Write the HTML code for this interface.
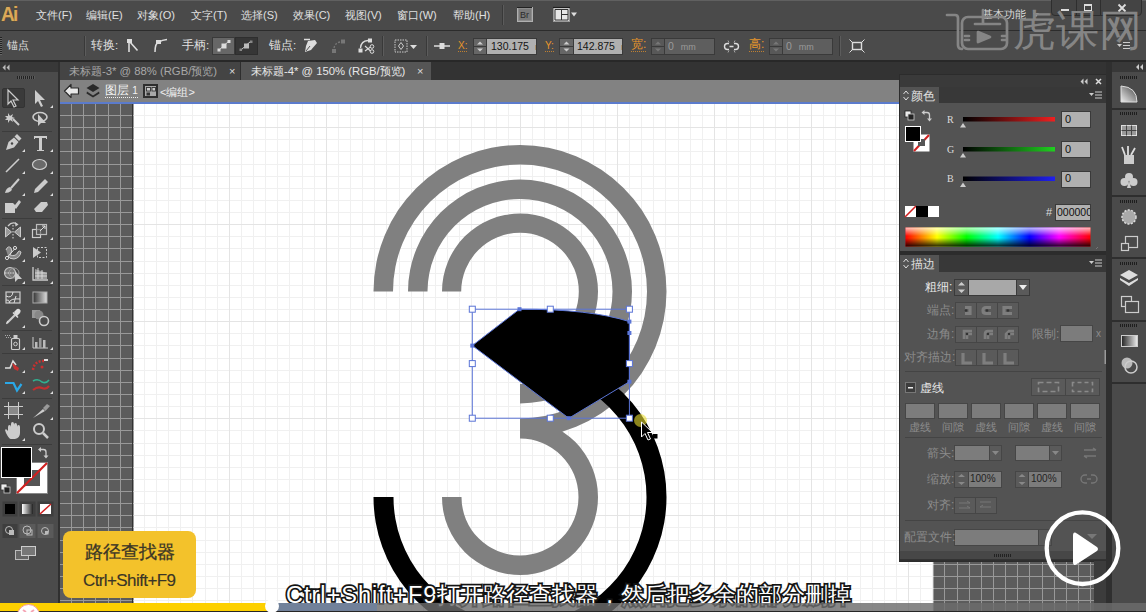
<!DOCTYPE html>
<html><head><meta charset="utf-8">
<style>
*{margin:0;padding:0;box-sizing:border-box}
html,body{width:1146px;height:612px;overflow:hidden;-webkit-font-smoothing:antialiased;background:#535353;font-family:"Liberation Sans",sans-serif;color:#e0e0e0}
.a{position:absolute}
.t{position:absolute;white-space:nowrap;font-size:12px;line-height:14px}
.sep{position:absolute;width:2px;border-left:1px solid #393939;border-right:1px solid #5c5c5c}
.fld{position:absolute;background:#b0b0b0;border:1px solid #3a3a3a;color:#151515;font-family:"Liberation Sans",sans-serif;font-size:10.5px;line-height:14px;padding-left:3px;white-space:nowrap;overflow:hidden}
.spin{position:absolute;background:#666;border:1px solid #3a3a3a}
.org{color:#e8962a}
svg{position:absolute;overflow:visible}
</style></head><body>
<svg class="a" style="left:0;top:0" width="1146" height="612" viewBox="0 0 1146 612">
<defs><clipPath id="ab"><rect x="133.5" y="104" width="800" height="508"/></clipPath></defs>
<rect x="60" y="80" width="1050" height="532" fill="#5c5c5c"/>
<path d="M71.5 104V612 M83.5 104V612 M95.5 104V612 M108.5 104V612 M120.5 104V612 M132.5 104V612 M144.5 104V612 M156.5 104V612 M168.5 104V612 M180.5 104V612 M192.5 104V612 M205.5 104V612 M217.5 104V612 M229.5 104V612 M241.5 104V612 M253.5 104V612 M265.5 104V612 M277.5 104V612 M289.5 104V612 M302.5 104V612 M314.5 104V612 M326.5 104V612 M338.5 104V612 M350.5 104V612 M362.5 104V612 M374.5 104V612 M386.5 104V612 M399.5 104V612 M411.5 104V612 M423.5 104V612 M435.5 104V612 M447.5 104V612 M459.5 104V612 M471.5 104V612 M484.5 104V612 M496.5 104V612 M508.5 104V612 M520.5 104V612 M532.5 104V612 M544.5 104V612 M556.5 104V612 M568.5 104V612 M581.5 104V612 M593.5 104V612 M605.5 104V612 M617.5 104V612 M629.5 104V612 M641.5 104V612 M653.5 104V612 M665.5 104V612 M678.5 104V612 M690.5 104V612 M702.5 104V612 M714.5 104V612 M726.5 104V612 M738.5 104V612 M750.5 104V612 M763.5 104V612 M775.5 104V612 M787.5 104V612 M799.5 104V612 M811.5 104V612 M823.5 104V612 M835.5 104V612 M847.5 104V612 M860.5 104V612 M872.5 104V612 M884.5 104V612 M896.5 104V612 M908.5 104V612 M920.5 104V612 M932.5 104V612 M944.5 104V612 M957.5 104V612 M969.5 104V612 M981.5 104V612 M993.5 104V612 M1005.5 104V612 M1017.5 104V612 M1029.5 104V612 M1042.5 104V612 M1054.5 104V612 M1066.5 104V612 M1078.5 104V612 M1090.5 104V612 M1102.5 104V612 M60 115.5H1110 M60 127.5H1110 M60 139.5H1110 M60 151.5H1110 M60 164.5H1110 M60 176.5H1110 M60 188.5H1110 M60 200.5H1110 M60 212.5H1110 M60 224.5H1110 M60 236.5H1110 M60 248.5H1110 M60 261.5H1110 M60 273.5H1110 M60 285.5H1110 M60 297.5H1110 M60 309.5H1110 M60 321.5H1110 M60 333.5H1110 M60 345.5H1110 M60 358.5H1110 M60 370.5H1110 M60 382.5H1110 M60 394.5H1110 M60 406.5H1110 M60 418.5H1110 M60 430.5H1110 M60 443.5H1110 M60 455.5H1110 M60 467.5H1110 M60 479.5H1110 M60 491.5H1110 M60 503.5H1110 M60 515.5H1110 M60 527.5H1110 M60 540.5H1110 M60 552.5H1110 M60 564.5H1110 M60 576.5H1110 M60 588.5H1110 M60 600.5H1110" stroke="#999999" stroke-width="1" fill="none"/>
<rect x="132" y="104" width="802" height="508" fill="#333"/>
<rect x="133.5" y="104" width="800" height="508" fill="#fff"/>
<path d="M71.5 104V612 M83.5 104V612 M95.5 104V612 M108.5 104V612 M120.5 104V612 M144.5 104V612 M156.5 104V612 M168.5 104V612 M180.5 104V612 M192.5 104V612 M205.5 104V612 M217.5 104V612 M241.5 104V612 M253.5 104V612 M265.5 104V612 M277.5 104V612 M289.5 104V612 M302.5 104V612 M314.5 104V612 M338.5 104V612 M350.5 104V612 M362.5 104V612 M374.5 104V612 M386.5 104V612 M399.5 104V612 M411.5 104V612 M435.5 104V612 M447.5 104V612 M459.5 104V612 M471.5 104V612 M484.5 104V612 M496.5 104V612 M508.5 104V612 M532.5 104V612 M544.5 104V612 M556.5 104V612 M568.5 104V612 M581.5 104V612 M593.5 104V612 M605.5 104V612 M629.5 104V612 M641.5 104V612 M653.5 104V612 M665.5 104V612 M678.5 104V612 M690.5 104V612 M702.5 104V612 M726.5 104V612 M738.5 104V612 M750.5 104V612 M763.5 104V612 M775.5 104V612 M787.5 104V612 M799.5 104V612 M823.5 104V612 M835.5 104V612 M847.5 104V612 M860.5 104V612 M872.5 104V612 M884.5 104V612 M896.5 104V612 M920.5 104V612 M932.5 104V612 M944.5 104V612 M957.5 104V612 M969.5 104V612 M981.5 104V612 M993.5 104V612 M1017.5 104V612 M1029.5 104V612 M1042.5 104V612 M1054.5 104V612 M1066.5 104V612 M1078.5 104V612 M1090.5 104V612 M60 115.5H1110 M60 139.5H1110 M60 151.5H1110 M60 164.5H1110 M60 176.5H1110 M60 188.5H1110 M60 200.5H1110 M60 212.5H1110 M60 236.5H1110 M60 248.5H1110 M60 261.5H1110 M60 273.5H1110 M60 285.5H1110 M60 297.5H1110 M60 309.5H1110 M60 333.5H1110 M60 345.5H1110 M60 358.5H1110 M60 370.5H1110 M60 382.5H1110 M60 394.5H1110 M60 406.5H1110 M60 430.5H1110 M60 443.5H1110 M60 455.5H1110 M60 467.5H1110 M60 479.5H1110 M60 491.5H1110 M60 503.5H1110 M60 527.5H1110 M60 540.5H1110 M60 552.5H1110 M60 564.5H1110 M60 576.5H1110 M60 588.5H1110 M60 600.5H1110" stroke="#f0f0f0" stroke-width="1" fill="none" clip-path="url(#ab)"/><path d="M132.5 104V612 M229.5 104V612 M326.5 104V612 M423.5 104V612 M520.5 104V612 M617.5 104V612 M714.5 104V612 M811.5 104V612 M908.5 104V612 M1005.5 104V612 M1102.5 104V612 M60 127.5H1110 M60 224.5H1110 M60 321.5H1110 M60 418.5H1110 M60 515.5H1110" stroke="#e4e4e4" stroke-width="1" fill="none" clip-path="url(#ab)"/>
<path d="M373.50 291.50A146.5 146.5 0 1 1 520.00 438.00L520.00 418.50A127 127 0 1 0 393.00 291.50Z M408.00 291.50A112 112 0 1 1 520.00 403.50L520.00 384.00A92.5 92.5 0 1 0 427.50 291.50Z M442.00 291.50A78 78 0 1 1 520.00 369.50L520.00 350.30A58.8 58.8 0 1 0 461.20 291.50Z M520.00 419.00A78 78 0 1 1 442.00 497.00L461.50 497.00A58.5 58.5 0 1 0 520.00 438.50Z" fill="#808080"/>
<path d="M593.25 370.13A146.5 146.5 0 1 1 373.50 497.00L393.50 497.00A126.5 126.5 0 1 0 583.25 387.45Z" fill="#000"/>
<path d="M472.3 345.6L519.5 309.2Q590 309 629.4 321.6L629.4 381.7L568.8 418.2Z" fill="#000"/>
<g fill="none" stroke="#5a74d6" stroke-width="1">
<rect x="472.3" y="309.2" width="157.1" height="109"/>
<path d="M472.3 345.6L519.5 309.2Q590 309 629.4 321.6L629.4 381.7L568.8 418.2Z"/>
</g>
<g fill="#fff" stroke="#5a74d6" stroke-width="1">
<rect x="469.3" y="306.2" width="6" height="6"/><rect x="547.3" y="306.2" width="6" height="6"/><rect x="626.4" y="306.2" width="6" height="6"/>
<rect x="469.3" y="360.6" width="6" height="6"/><rect x="626.4" y="360.6" width="6" height="6"/>
<rect x="469.3" y="415.2" width="6" height="6"/><rect x="547.3" y="415.2" width="6" height="6"/><rect x="626.4" y="415.2" width="6" height="6"/>
</g>
<g fill="#5a74d6">
<rect x="517.5" y="307.2" width="4" height="4"/><rect x="627.4" y="319.6" width="4" height="4"/><rect x="627.4" y="331" width="4" height="4"/><rect x="627.4" y="379.7" width="4" height="4"/><rect x="470.3" y="343.6" width="4" height="4"/><rect x="566.8" y="416.2" width="4" height="4"/>
</g>
<circle cx="640.5" cy="420.5" r="6.5" fill="#e8dc30" opacity="0.6"/>
<path d="M641.5 422L641.5 437L645 433.5L648 440L650.5 439L647.5 432.5L652.5 432.5Z" fill="#000" stroke="#fff" stroke-width="1"/>
<rect x="653" y="434" width="4.5" height="4.5" fill="#000"/>
</svg>
<!-- MENU BAR -->
<div class="a" style="left:0;top:0;width:1146px;height:30px;background:#4a4a4a;border-top:1px solid #606060"></div>
<div class="a" style="left:0;top:30px;width:1146px;height:1px;background:#2c2c2c"></div>
<div class="t" style="left:1px;top:3px;font-size:20px;line-height:22px;font-weight:bold;color:#dba95a;letter-spacing:-1.8px;transform:scaleX(0.95);transform-origin:0 0;-webkit-text-stroke:0.6px #6a4a1a;paint-order:stroke fill">Ai</div>
<div class="t" style="left:36px;top:8px;font-size:11px">文件(F)</div>
<div class="t" style="left:86px;top:8px;font-size:11px">编辑(E)</div>
<div class="t" style="left:137px;top:8px;font-size:11px">对象(O)</div>
<div class="t" style="left:191px;top:8px;font-size:11px">文字(T)</div>
<div class="t" style="left:241px;top:8px;font-size:11px">选择(S)</div>
<div class="t" style="left:293px;top:8px;font-size:11px">效果(C)</div>
<div class="t" style="left:345px;top:8px;font-size:11px">视图(V)</div>
<div class="t" style="left:397px;top:8px;font-size:11px">窗口(W)</div>
<div class="t" style="left:453px;top:8px;font-size:11px">帮助(H)</div>
<div class="sep" style="left:502px;top:5px;height:20px"></div>
<svg style="left:517px;top:7px" width="60" height="15">
<rect x="0.5" y="0.5" width="15" height="14" fill="#8c8c8c" stroke="#b0b0b0"/><rect x="2" y="2" width="12" height="11" fill="#7a7a7a"/><path d="M0 0.5H15" stroke="#222"/>
<text x="3" y="11" font-family="Liberation Sans" font-size="9" fill="#2a2a2a">Br</text>
<rect x="36.5" y="0.5" width="16" height="14" fill="#d8d8d8" stroke="#9a9a9a"/><path d="M36 0.5H53" stroke="#1e1e1e" stroke-width="1.2"/><path d="M38 2.5H51V13H38Z" fill="#e6e6e6" stroke="#333"/><path d="M44.5 2.5V13M44.5 7.5H51" stroke="#333"/>
<path d="M54 5.5H60L57 9.5Z" fill="#ddd"/>
</svg>
<div class="t" style="left:982px;top:7px;font-size:11px;color:#d8d8d8">基本功能</div>
<svg style="left:1032px;top:12px" width="8" height="6"><path d="M1 1h6l-3 4z" fill="#bbb"/></svg>
<div class="a" style="left:1051px;top:-2px;width:91px;height:18px;border:1px solid #2e2e2e;border-radius:0 0 4px 4px;background:#444"></div>
<div class="a" style="left:1076px;top:0;width:1px;height:16px;background:#2e2e2e"></div>
<div class="a" style="left:1100px;top:0;width:1px;height:16px;background:#2e2e2e"></div>
<div class="a" style="left:1061px;top:9px;width:8px;height:2px;background:#ddd"></div>
<div class="a" style="left:1084px;top:4px;width:8px;height:7px;border:1.5px solid #ddd;border-top-width:2.5px"></div>
<svg style="left:1117px;top:3px" width="10" height="10"><path d="M1.5 1.5L8.5 8.5M8.5 1.5L1.5 8.5" stroke="#ddd" stroke-width="1.8"/></svg>

<!-- CONTROL BAR -->
<div class="a" style="left:0;top:31px;width:1146px;height:30px;background:#4b4b4b"></div>
<div class="a" style="left:0;top:60px;width:1146px;height:2px;background:#282828"></div>
<div class="a" style="left:0;top:37px;width:2px;height:18px;background:repeating-linear-gradient(#222 0 1px,#666 1px 2px)"></div>
<div class="t" style="left:7px;top:38px;font-size:11px">锚点</div>
<div class="sep" style="left:84px;top:36px;height:20px"></div>
<div class="t" style="left:91px;top:38px;font-size:11.5px">转换:</div>
<svg style="left:124px;top:37px" width="16" height="16"><rect x="3" y="2" width="5" height="4" fill="#ddd"/><path d="M5 5V15M6 5L13.5 13.5" stroke="#ddd" stroke-width="1.6" fill="none"/></svg>
<svg style="left:152px;top:37px" width="16" height="16"><rect x="4" y="3" width="5" height="4" fill="#ddd"/><path d="M3 15Q3 6 7 5Q10 3 15 2.5" stroke="#ddd" stroke-width="1.5" fill="none"/></svg>
<div class="t" style="left:182px;top:38px;font-size:11.5px">手柄:</div>
<div class="a" style="left:212px;top:37px;width:23px;height:18px;background:#676767;border:1px solid #3a3a3a"></div>
<div class="a" style="left:235px;top:37px;width:23px;height:18px;background:#363636;border:1px solid #2e2e2e"></div>
<svg style="left:212px;top:37px" width="46" height="18"><path d="M7 13L17 4M29 13L39 4" stroke="#ccc" stroke-width="1"/><rect x="9.5" y="6.5" width="5" height="5" fill="#ddd"/><rect x="5.5" y="11.5" width="3" height="3" fill="#ddd"/><rect x="15.5" y="3" width="3" height="3" fill="#ddd"/><rect x="32" y="6.5" width="5" height="5" fill="#bbb"/><rect x="27.5" y="11.5" width="2.5" height="2.5" fill="#888"/><rect x="38" y="3.5" width="2.5" height="2.5" fill="#888"/></svg>
<div class="t" style="left:269px;top:38px;font-size:11.5px">锚点:</div>
<svg style="left:302px;top:37px" width="18" height="17"><path d="M2 2.5H8" stroke="#ddd" stroke-width="1.5"/><path d="M6 4L13 3L15 6L9 13L3 15L4 9Z" fill="#ddd"/><path d="M4 14L8 9" stroke="#555" stroke-width="1"/></svg>
<svg style="left:331px;top:39px" width="16" height="15"><rect x="10" y="0.5" width="4" height="4" fill="#777"/><rect x="1" y="10" width="4" height="4" fill="#777"/><path d="M3 9Q4 4 9 3" stroke="#777" stroke-width="1.3" stroke-dasharray="2 1.5" fill="none"/></svg>
<svg style="left:358px;top:38px" width="17" height="16"><rect x="10" y="0.5" width="4" height="4" fill="#ddd"/><rect x="0.5" y="10.5" width="4" height="4" fill="#ddd"/><path d="M2.5 10Q3 3 10 2.5" stroke="#ddd" stroke-width="1.3" fill="none"/><circle cx="14" cy="8.5" r="1.8" fill="none" stroke="#ddd"/><circle cx="14" cy="13.5" r="1.8" fill="none" stroke="#ddd"/><path d="M7 8L12.5 13M7 13L12.5 9" stroke="#ddd" stroke-width="1.1"/></svg>
<div class="sep" style="left:382px;top:36px;height:20px"></div>
<svg style="left:394px;top:39px" width="26" height="14"><rect x="1" y="1" width="12" height="12" fill="none" stroke="#ccc" stroke-dasharray="1.5 1"/><path d="M7 3.5L9.5 7L7 10.5L4.5 7Z" fill="none" stroke="#ccc"/><path d="M16 6h7l-3.5 4z" fill="#ddd"/></svg>
<div class="sep" style="left:426px;top:36px;height:20px"></div>
<svg style="left:433px;top:40px" width="18" height="12"><path d="M1 6H17" stroke="#ddd" stroke-width="1.5"/><rect x="6.5" y="3" width="5" height="6" fill="#ddd"/></svg>
<div class="t org" style="left:458px;top:40px;font-size:10px;border-bottom:1px dotted #c08030;line-height:11px">X:</div>
<div class="spin" style="left:473px;top:38px;width:14px;height:17px"></div>
<svg style="left:473px;top:38px" width="14" height="17"><path d="M4 6.5L7 3.5L10 6.5Z M4 10.5L7 13.5L10 10.5Z" fill="#ccc"/><path d="M1 8.5H13" stroke="#3a3a3a"/></svg>
<div class="fld" style="left:486px;top:38px;width:51px;height:17px;padding-left:4px;line-height:15px">130.175<span style="margin-left:6px;font-size:9px">ı</span></div>
<div class="t org" style="left:545px;top:40px;font-size:10px;border-bottom:1px dotted #c08030;line-height:11px">Y:</div>
<div class="spin" style="left:559px;top:38px;width:15px;height:17px"></div>
<svg style="left:559px;top:38px" width="15" height="17"><path d="M4.5 6.5L7.5 3.5L10.5 6.5Z M4.5 10.5L7.5 13.5L10.5 10.5Z" fill="#ccc"/><path d="M1 8.5H14" stroke="#3a3a3a"/></svg>
<div class="fld" style="left:573px;top:38px;width:50px;height:17px;padding-left:3px;line-height:15px">142.875<span style="margin-left:6px;font-size:9px">ı</span></div>
<div class="t org" style="left:631px;top:38px;border-bottom:1px dotted #c08030;line-height:13px">宽:</div>
<div class="spin" style="left:651px;top:38px;width:14px;height:17px;background:#585858"></div>
<svg style="left:651px;top:38px" width="14" height="17"><path d="M4 6.5L7 3.5L10 6.5Z M4 10.5L7 13.5L10 10.5Z" fill="#777"/><path d="M1 8.5H13" stroke="#3a3a3a"/></svg>
<div class="fld" style="left:664px;top:38px;width:51px;height:17px;background:#5e5e5e;color:#9a9a9a;line-height:15px;padding-left:3px">0 <span style="font-size:9px;margin-left:4px">mm</span></div>
<svg style="left:724px;top:40px" width="15" height="13"><path d="M5 3.5H3.5A3 3 0 0 0 3.5 9.5H5M10 3.5H11.5A3 3 0 0 1 11.5 9.5H10M5.5 6.5H9.5" stroke="#ddd" stroke-width="1.4" fill="none"/><path d="M4 0.5L5 2.5M11 0.5L10 2.5M4 12.5L5 10.5M11 12.5L10 10.5" stroke="#bbb" stroke-width="0.8"/></svg>
<div class="t org" style="left:749px;top:38px;border-bottom:1px dotted #c08030;line-height:13px">高:</div>
<div class="spin" style="left:769px;top:38px;width:14px;height:17px;background:#585858"></div>
<svg style="left:769px;top:38px" width="14" height="17"><path d="M4 6.5L7 3.5L10 6.5Z M4 10.5L7 13.5L10 10.5Z" fill="#777"/><path d="M1 8.5H13" stroke="#3a3a3a"/></svg>
<div class="fld" style="left:782px;top:38px;width:51px;height:17px;background:#5e5e5e;color:#9a9a9a;line-height:15px;padding-left:3px">0 <span style="font-size:9px;margin-left:4px">mm</span></div>
<div class="sep" style="left:839px;top:36px;height:20px"></div>
<svg style="left:849px;top:39px" width="16" height="14"><rect x="3.5" y="3.5" width="9" height="7" fill="none" stroke="#ddd" stroke-width="1.4"/><path d="M0.5 0.5L3.5 3.5M15.5 0.5L12.5 3.5M0.5 13.5L3.5 10.5M15.5 13.5L12.5 10.5" stroke="#ddd"/></svg>
<svg style="left:1117px;top:41px" width="14" height="10"><path d="M0 3h5l-2.5 3z" fill="#ccc"/><path d="M6 1.5H13M6 4.5H13M6 7.5H13" stroke="#ccc" stroke-width="1.2"/></svg>

<!-- TAB BAR -->
<div class="a" style="left:60px;top:62px;width:1046px;height:18px;background:#333333"></div>
<div class="a" style="left:60px;top:62px;width:181px;height:18px;background:#444"></div>
<div class="a" style="left:241px;top:62px;width:190px;height:18px;background:#555"></div>
<div class="a" style="left:240px;top:62px;width:1px;height:18px;background:#2e2e2e"></div>
<div class="t" style="left:69px;top:64px;font-size:11.3px;color:#a8a8a8">未标题-3* @ 88% (RGB/预览)</div>
<div class="t" style="left:229px;top:64px;font-size:11px;color:#ddd">×</div>
<div class="t" style="left:251px;top:64px;font-size:11.3px;color:#e8e8e8">未标题-4* @ 150% (RGB/预览)</div>
<div class="t" style="left:417px;top:64px;font-size:11px;color:#ddd">×</div>

<!-- BREADCRUMB -->
<div class="a" style="left:60px;top:80px;width:840px;height:22px;background:#828282"></div>
<div class="a" style="left:60px;top:101.5px;width:840px;height:2.5px;background:#5b7bcc"></div>
<svg style="left:63px;top:83px" width="18" height="16"><path d="M1.5 8L8 1.5V5H15.5V11H8V14.5Z" fill="#e8e8e8" stroke="#2a2a2a" stroke-width="1.2" stroke-linejoin="round"/></svg>
<svg style="left:85px;top:83px" width="16" height="16"><path d="M8 1L14.5 5L8 9L1.5 5Z" fill="#2a2a2a"/><path d="M2 8.5L8 12.5L14 8.5L14.5 10.5L8 14.5L1.5 10.5Z" fill="#2a2a2a"/></svg>
<div class="t" style="left:105px;top:84px;color:#f2f2f2;border-bottom:1px dotted #eee;line-height:13px">图层 <span style="font-size:10px">1</span></div>
<svg style="left:143px;top:84px" width="15" height="14"><rect x="1" y="1" width="13" height="12" fill="#a8a8a8" stroke="#2e2e2e" stroke-width="2"/><rect x="3.5" y="3.5" width="4" height="3.5" fill="#ccc" stroke="#333" stroke-width="0.9"/><rect x="9" y="3.5" width="3.5" height="3.5" fill="#ccc" stroke="#333" stroke-width="0.9"/><rect x="3.5" y="8.5" width="3.5" height="3" fill="#333"/></svg>
<div class="t" style="left:160px;top:85px;font-size:11px;color:#f0f0f0">&lt;编组&gt;</div>
<!-- TOOLBAR -->
<div class="a" style="left:0;top:62px;width:58px;height:10px;background:#383838"></div>
<svg style="left:2px;top:64px" width="8" height="7"><path d="M3.5 0.5L0.5 3.5L3.5 6.5ZM7.5 0.5L4.5 3.5L7.5 6.5Z" fill="#bbb"/></svg>
<div class="a" style="left:0;top:72px;width:58px;height:540px;background:#4b4b4b"></div>
<div class="a" style="left:58px;top:62px;width:2px;height:550px;background:#303030"></div>
<div class="a" style="left:17px;top:76px;width:18px;height:3px;background:repeating-linear-gradient(90deg,#222 0 1px,#5a5a5a 1px 2px)"></div>
<div class="a" style="left:2px;top:88px;width:23px;height:20px;background:#3a3a3a;border:1px solid #333;border-radius:2px"></div>
<svg style="left:0;top:72px" width="56" height="500" fill="#ccc" stroke="none">
<!-- row1 y=97 -->
<path d="M8 18L8 32L11 29L14 35L16 34L13 28L18 28Z" fill="none" stroke="#ccc" stroke-width="1.2"/>
<path d="M35 18L35 32L38 29L41 35L43 34L40 28L45 28Z"/>
<!-- row2 y=119 -->
<path d="M8 41l2 3l3 -2l-1 3l3 1l-3 1l1 3l-3-2l-2 3l0-3l-3 0l2-2l-2-2l3 0z"/><path d="M13 47L19 53" stroke="#ccc" stroke-width="2"/>
<ellipse cx="40" cy="45" rx="7" ry="4.5" fill="none" stroke="#ccc" stroke-width="1.6"/><path d="M38 42L38 54L41 51L46 51Z"/>
<rect x="2" y="59" width="50" height="1" fill="#3c3c3c"/>
<!-- row3 y=143 -->
<path d="M6 78L8.5 70L14 65.5L18.5 70L14 75.5Z"/><circle cx="12" cy="71.5" r="1.2" fill="#444"/><path d="M14.5 64.5L17 62L21.5 66.5L19 69Z"/>
<path d="M34 64H47V67H46V66H42V78H44V79H37V78H39V66H35V67H34Z"/>
<!-- row4 y=165 -->
<path d="M6 100L19 87" stroke="#ccc" stroke-width="1.6"/>
<ellipse cx="39.5" cy="92.5" rx="7" ry="5" fill="#6a6a6a" stroke="#cfcfcf" stroke-width="1.2"/>
<!-- row5 y=186 -->
<path d="M19 107L11 116" stroke="#ccc" stroke-width="2"/><path d="M5 121Q6 116 10 115Q13 117 11 119Q9 121 5 121Z"/>
<path d="M45 107L48 110L38 120L34 121L35 117Z"/>
<!-- row6 y=208 -->
<path d="M5 131H13L15 133L19 128L21 130L16 137L15 136V141H5Z"/>
<path d="M34 137L41 130H47L48 133L42 140H36Z"/>
<rect x="2" y="146" width="50" height="1" fill="#3c3c3c"/>
<!-- row7 y=231 -->
<path d="M5.5 155L11.5 160L5.5 165Z M20.5 155L14.5 160L20.5 165Z" fill="#999" stroke="#ccc" stroke-width="1"/><path d="M13 153V167" stroke="#ddd" stroke-dasharray="1.5 1.5"/><path d="M8 154Q12 149 17 152" stroke="#ccc" stroke-width="1.3" fill="none"/><path d="M15 150L18.5 152.5L15.5 154.5Z" fill="#ccc"/>
<rect x="32.5" y="157.5" width="8" height="8" fill="none" stroke="#ccc" stroke-width="1.2"/><rect x="36.5" y="152.5" width="10" height="10" fill="#5a5a5a" fill-opacity="0.6" stroke="#bbb" stroke-width="1.2"/><path d="M40 159L45 154M42 154H45V157" stroke="#ddd" fill="none"/>
<!-- row8 y=252 -->
<path d="M6 178Q8 173 11 176Q13 179 10 183Q16 185 18 180Q19 178 21 180Q20 186 14 187Q9 187 8 184" fill="#888" stroke="#ccc" stroke-width="1"/><circle cx="7" cy="186" r="1.6" fill="none" stroke="#ddd"/><circle cx="15" cy="176" r="1.6" fill="none" stroke="#ddd"/><path d="M7.5 185L15 176.5" stroke="#ddd"/>
<path d="M33 175L33 186L41 180.5Z" fill="#ccc"/><rect x="37.5" y="175.5" width="9" height="10" fill="none" stroke="#ccc" stroke-dasharray="2 1.5"/>
<!-- row9 y=274 -->
<circle cx="10" cy="201" r="5.5" fill="#777" stroke="#ccc" stroke-width="1.1"/><circle cx="14" cy="201" r="5" fill="none" stroke="#999" stroke-width="1"/><path d="M5 201H17" stroke="#ddd" stroke-dasharray="1.5 1"/><path d="M15 199L15 210L18 207L22 207Z" fill="#ccc"/>
<path d="M33 195V208H48" stroke="#ccc" fill="none" stroke-width="1.3"/><path d="M35 197L47 201V207H35Z" fill="#999"/><path d="M38 196V207M42 198V207M35 201H47M35 204H47" stroke="#ddd" stroke-width="0.9"/>
<rect x="2" y="213" width="50" height="1" fill="#3c3c3c"/>
<!-- row10 y=297 -->
<rect x="6" y="220" width="14" height="11" fill="#555" stroke="#ccc" stroke-width="1.2"/><path d="M6 224Q12 227 13 220M9 231Q10 226 20 227M14 231L16 224M6 228Q9 227 10 231" stroke="#ddd" fill="none"/>
<defs><linearGradient id="gtool" x1="0" x2="1"><stop offset="0" stop-color="#333"/><stop offset="1" stop-color="#ddd"/></linearGradient></defs>
<rect x="33" y="220" width="14" height="11" fill="url(#gtool)" stroke="#aaa"/>
<!-- row11 y=319 -->
<path d="M7 251L15 243" stroke="#ccc" stroke-width="2.2"/><path d="M6.5 252L8 249" stroke="#ddd" stroke-width="1.2"/><path d="M14 240L17 237Q19.5 236 20.5 238.5Q21 240 19.5 241.5L16.5 244.5Z" fill="#ddd"/><path d="M13 240.5L18 245.5" stroke="#ddd" stroke-width="1.5"/>
<rect x="32" y="238" width="8" height="8" fill="#999"/><circle cx="39" cy="243" r="4.5" fill="#888"/><circle cx="44" cy="249" r="4.5" fill="#4b4b4b" stroke="#ccc" stroke-width="1.6"/>
<rect x="2" y="258" width="50" height="1" fill="#3c3c3c"/>
<!-- row12 y=343 -->
<rect x="11.5" y="266.5" width="8" height="11" rx="1" fill="none" stroke="#ccc" stroke-width="1.2"/><circle cx="15.5" cy="272" r="1.8" fill="none" stroke="#ccc"/><rect x="13.5" y="263" width="4" height="3" fill="#ccc"/><path d="M5 263.5h1M7 263.5h1M9 263.5h1M6 265.5h1M8 265.5h1M10 265.5h1" stroke="#aaa"/>
<path d="M33 265V276H48" stroke="#ccc" fill="none"/><rect x="35" y="270" width="2.5" height="6" fill="#bbb"/><rect x="39" y="266" width="2.5" height="10" fill="#999"/><rect x="43" y="268" width="2.5" height="8" fill="#bbb"/>
<rect x="2" y="281" width="50" height="1" fill="#3c3c3c"/>
<!-- row13 y=365 red -->
<path d="M5 296L10 296L13 289L16 293" stroke="#ddd" stroke-width="1.6" fill="none"/><path d="M12 291L19 296L18 299L14 297Z" fill="#c83030"/>
<path d="M33 298Q34 289 44 289" stroke="#c83030" stroke-width="2.5" fill="none" stroke-dasharray="2 1.5"/><circle cx="42" cy="295" r="1.5" fill="#c83030"/><path d="M44 288H48" stroke="#ddd" stroke-width="2"/>
<!-- row14 y=386 -->
<path d="M5 311H13.5L17 318.5L21.5 312" stroke="#2aa8e8" stroke-width="2.2" fill="none"/>
<path d="M33 309Q38 306 42 310Q46 312 49 308" stroke="#30b090" stroke-width="1.6" fill="none"/><path d="M33 318Q38 314 42 316Q46 318 49 314" stroke="#c03030" stroke-width="2.2" fill="none"/>
<rect x="2" y="326" width="50" height="1" fill="#3c3c3c"/>
<!-- row15 y=410 -->
<path d="M4 334.5H23M4 342.5H23M8.5 330V347M18.5 330V347" stroke="#ccc"/><rect x="8.5" y="334.5" width="10" height="8" fill="#888" stroke="#ccc"/>
<path d="M33 346L43 337L45 339Z" fill="#ccc"/><path d="M43 336L47 332L50 334L45.5 339Z" fill="#999"/>
<!-- row16 y=432 -->
<path d="M8 364V355Q8 353 9.5 353Q11 353 11 355V352Q11 350 12.5 350Q14 350 14 352V353Q14 351 15.5 351Q17 351 17 353V355Q17 353 18.5 353Q20 353 20 355V361Q20 366 15 367H11Q9 367 6 361L5 358Q6 356 8 359Z"/>
<circle cx="39" cy="357" r="5" fill="none" stroke="#ccc" stroke-width="2"/><path d="M43 361L48 366" stroke="#ccc" stroke-width="2.5"/>
<rect x="2" y="372" width="50" height="1" fill="#3c3c3c"/>
<!-- tiny triangles -->
<g fill="#ddd">
<path d="M50 36h3v-3z M22 80h3v-3z M50 80h3v-3z M22 102h3v-3z M50 102h3v-3z M22 124h3v-3z M50 124h3v-3z M22 168h3v-3z M50 168h3v-3z M22 190h3v-3z M50 190h3v-3z M22 212h3v-3z M50 212h3v-3z M22 256h3v-3z M22 278h3v-3z M50 278h3v-3z M22 301h3v-3z M50 301h3v-3z M22 322h3v-3z M50 322h3v-3z M50 348h3v-3z M22 369h3v-3z"/>
</g>
<!-- fill/stroke -->
<rect x="16.5" y="390.5" width="31" height="31" fill="#fff" stroke="#888"/><path d="M17 421L47 391" stroke="#d02020" stroke-width="2.2"/><rect x="24" y="398" width="16" height="16" fill="#555"/><path d="M24 414L40 398" stroke="#d02020" stroke-width="2.2"/>
<rect x="1" y="375" width="31" height="31" fill="#fff"/><rect x="2" y="376" width="29" height="29" fill="#000"/>
<path d="M40.5 377.5H43.5Q46 377.5 46 380V384" stroke="#ccc" stroke-width="1.3" fill="none"/><path d="M38 377.5L41 375V380Z M43.5 383.5H48.5L46 386.5Z" fill="#ccc"/>
<rect x="1" y="412" width="6" height="6" fill="#eee" stroke="#333" stroke-width="0.8"/><rect x="4" y="415" width="6" height="6" fill="#222" stroke="#ccc" stroke-width="0.8"/>
<!-- mode buttons -->
<rect x="2.5" y="429.5" width="15" height="15" fill="#3e3e3e"/><rect x="5" y="432" width="10" height="10" fill="#000"/>
<rect x="19.5" y="429.5" width="16" height="15" fill="#3e3e3e"/><defs><linearGradient id="gm" x1="0" x2="1"><stop offset="0" stop-color="#fff"/><stop offset="1" stop-color="#222"/></linearGradient></defs><rect x="22" y="432" width="11" height="10" fill="url(#gm)"/>
<rect x="37.5" y="429.5" width="16" height="15" fill="#3e3e3e"/><rect x="40" y="432" width="11" height="10" fill="#fff"/><path d="M40 442L51 432" stroke="#d02020" stroke-width="1.5"/>
<rect x="2.5" y="452" width="15" height="14" fill="#3e3e3e"/><rect x="19.5" y="452" width="16" height="14" fill="#5a5a5a"/><rect x="37.5" y="452" width="16" height="14" fill="#5a5a5a"/>
<circle cx="9" cy="458" r="3.5" fill="none" stroke="#bbb"/><rect x="9" y="458" width="5" height="5" fill="#bbb"/>
<circle cx="27" cy="458" r="4" fill="none" stroke="#bbb"/><rect x="27" y="458" width="5" height="5" fill="none" stroke="#bbb"/>
<circle cx="45" cy="459" r="3.5" fill="none" stroke="#bbb"/><rect x="45" y="459" width="3.5" height="3.5" fill="#bbb"/>
<rect x="15.5" y="478.5" width="13" height="9" fill="#666" stroke="#bbb"/><rect x="21.5" y="474.5" width="14" height="9" fill="#777" stroke="#ccc"/>
</svg>
<!-- RIGHT PANEL GROUP -->
<div class="a" style="left:899px;top:74px;width:209px;height:488px;background:#2c2c2c"></div>
<div class="a" style="left:900px;top:75px;width:206px;height:12px;background:#3a3a3a"></div>
<svg style="left:1080px;top:77px" width="24" height="9"><path d="M3.5 1.5L0.5 4.5L3.5 7.5ZM7.5 1.5L4.5 4.5L7.5 7.5Z" fill="#ccc"/><path d="M16 2L21 7M21 2L16 7" stroke="#ddd" stroke-width="1.5"/></svg>
<!-- color panel -->
<div class="a" style="left:900px;top:87px;width:206px;height:16px;background:#383838"></div>
<div class="a" style="left:900px;top:87px;width:39px;height:16px;background:#535353"></div>
<svg style="left:903px;top:90px" width="6" height="11"><path d="M0.5 4L3 1L5.5 4M0.5 7L3 10L5.5 7" stroke="#ddd" fill="none"/></svg>
<div class="t" style="left:911px;top:89px;font-size:11.5px;color:#e0e0e0">颜色</div>
<svg style="left:1089px;top:91px" width="14" height="9"><path d="M0 2h5l-2.5 3z" fill="#ccc"/><path d="M6 1H13M6 4H13M6 7H13" stroke="#ccc" stroke-width="1.2"/></svg>
<div class="a" style="left:900px;top:103px;width:206px;height:148px;background:#535353"></div>
<svg style="left:900px;top:103px" width="206" height="148">
<rect x="5" y="8" width="6" height="6" fill="#eee" stroke="#222" stroke-width="0.8"/><rect x="8" y="11" width="6" height="6" fill="#222" stroke="#ccc" stroke-width="0.8"/>
<path d="M24 9.5H27Q29.5 9.5 29.5 12V16" stroke="#ccc" stroke-width="1.3" fill="none"/><path d="M21.5 9.5L24.5 7V12Z M27 15.5H32L29.5 18.5Z" fill="#ccc"/>
<rect x="13.5" y="31.5" width="16" height="17" fill="#fff"/><path d="M14 48L29 32" stroke="#d02020" stroke-width="2"/><rect x="18" y="36" width="7" height="7" fill="#555"/>
<rect x="5" y="23" width="16" height="16" fill="#fff"/><rect x="6" y="24" width="14" height="14" fill="#000"/>
<defs>
<linearGradient id="gr" x1="0" x2="1"><stop offset="0" stop-color="#000"/><stop offset="1" stop-color="#f02020"/></linearGradient>
<linearGradient id="gg" x1="0" x2="1"><stop offset="0" stop-color="#000"/><stop offset="1" stop-color="#20d020"/></linearGradient>
<linearGradient id="gb" x1="0" x2="1"><stop offset="0" stop-color="#000"/><stop offset="1" stop-color="#2020f0"/></linearGradient>
<linearGradient id="spec" x1="0" x2="1"><stop offset="0" stop-color="#ff0000"/><stop offset="0.17" stop-color="#ffff00"/><stop offset="0.33" stop-color="#00ff00"/><stop offset="0.5" stop-color="#00ffff"/><stop offset="0.67" stop-color="#0000ff"/><stop offset="0.83" stop-color="#ff00ff"/><stop offset="1" stop-color="#ff0000"/></linearGradient>
<linearGradient id="specd" x1="0" y1="0" x2="0" y2="1"><stop offset="0" stop-color="#fff" stop-opacity="0.75"/><stop offset="0.45" stop-color="#fff" stop-opacity="0"/><stop offset="0.55" stop-color="#000" stop-opacity="0"/><stop offset="1" stop-color="#000" stop-opacity="0.85"/></linearGradient>
</defs>
<rect x="63" y="14" width="92" height="4.5" fill="url(#gr)"/><path d="M60 24.5L63 20L66 24.5Z" fill="#ccc"/>
<rect x="63" y="44" width="92" height="4.5" fill="url(#gg)"/><path d="M60 54.5L63 50L66 54.5Z" fill="#ccc"/>
<rect x="63" y="73.5" width="92" height="4.5" fill="url(#gb)"/><path d="M60 84L63 79.5L66 84Z" fill="#ccc"/>
<rect x="161.5" y="8.5" width="29" height="16" fill="#b0b0b0" stroke="#3a3a3a"/>
<rect x="161.5" y="38.5" width="29" height="16" fill="#b0b0b0" stroke="#3a3a3a"/>
<rect x="161.5" y="68.5" width="29" height="16" fill="#b0b0b0" stroke="#3a3a3a"/>
<rect x="155.5" y="101.5" width="35" height="16" fill="#b0b0b0" stroke="#3a3a3a"/>
<rect x="5" y="103" width="11" height="11" fill="#fff"/><path d="M5 114L16 103" stroke="#d02020" stroke-width="1.6"/><rect x="16" y="103" width="12" height="11" fill="#000"/><rect x="28" y="103" width="11" height="11" fill="#fff"/>
<rect x="5.5" y="124.5" width="185" height="19" fill="url(#spec)"/><rect x="5.5" y="124.5" width="185" height="19" fill="url(#specd)"/>
<path d="M196 146l2-2M199 146l-0 0M200 143l-0 0" stroke="#777"/>
</svg>
<div class="t" style="left:947px;top:113px;font-family:'Liberation Serif',serif;font-size:10px;color:#ddd">R</div>
<div class="t" style="left:947px;top:143px;font-family:'Liberation Serif',serif;font-size:10px;color:#ddd">G</div>
<div class="t" style="left:947px;top:172px;font-family:'Liberation Serif',serif;font-size:10px;color:#ddd">B</div>
<div class="t" style="left:1065px;top:112px;font-family:'Liberation Sans',sans-serif;font-size:11px;color:#111">0</div>
<div class="t" style="left:1065px;top:142px;font-family:'Liberation Sans',sans-serif;font-size:11px;color:#111">0</div>
<div class="t" style="left:1065px;top:171px;font-family:'Liberation Sans',sans-serif;font-size:11px;color:#111">0</div>
<div class="t" style="left:1046px;top:205px;font-size:11px;color:#ddd">#</div>
<div class="t" style="left:1057px;top:205px;font-family:'Liberation Sans',sans-serif;font-size:10.5px;color:#111;width:33px;overflow:hidden">000000</div>

<!-- stroke panel -->
<div class="a" style="left:900px;top:255px;width:206px;height:17px;background:#383838"></div>
<div class="a" style="left:900px;top:255px;width:39px;height:17px;background:#535353"></div>
<svg style="left:903px;top:258px" width="6" height="11"><path d="M0.5 4L3 1L5.5 4M0.5 7L3 10L5.5 7" stroke="#ddd" fill="none"/></svg>
<div class="t" style="left:911px;top:257px;font-size:11.5px;color:#e0e0e0">描边</div>
<svg style="left:1089px;top:259px" width="14" height="9"><path d="M0 2h5l-2.5 3z" fill="#ccc"/><path d="M6 1H13M6 4H13M6 7H13" stroke="#ccc" stroke-width="1.2"/></svg>
<div class="a" style="left:900px;top:272px;width:206px;height:288px;background:#535353"></div>
<div class="t" style="left:925px;top:280px;color:#e8e8e8">粗细:</div>
<div class="t" style="left:927px;top:303px;color:#8c8c8c">端点:</div>
<div class="t" style="left:927px;top:327px;color:#8c8c8c">边角:</div>
<div class="t" style="left:1032px;top:327px;color:#8c8c8c">限制:</div>
<div class="t" style="left:1096px;top:327px;font-size:10px;color:#8c8c8c">x</div>
<div class="t" style="left:904px;top:350px;color:#8c8c8c">对齐描边:</div>
<div class="t" style="left:920px;top:381px;color:#e8e8e8">虚线</div>
<svg style="left:900px;top:272px" width="206" height="288">
<rect x="54.5" y="7.5" width="14" height="16" fill="#5a5a5a" stroke="#3a3a3a"/><path d="M58 13.5L61.5 10L65 13.5ZM58 17.5L61.5 21L65 17.5Z" fill="#ccc"/>
<rect x="68.5" y="7.5" width="48" height="16" fill="#a8a8a8" stroke="#3a3a3a"/>
<rect x="116.5" y="7.5" width="13" height="16" fill="#5a5a5a" stroke="#3a3a3a"/><path d="M119 13H127L123 18Z" fill="#eee"/>
<g fill="#5a5a5a" stroke="#464646">
<rect x="55.5" y="30.5" width="21" height="16"/><rect x="76.5" y="30.5" width="21" height="16"/><rect x="97.5" y="30.5" width="21" height="16"/>
<rect x="55.5" y="54.5" width="21" height="16"/><rect x="76.5" y="54.5" width="21" height="16"/><rect x="97.5" y="54.5" width="21" height="16"/>
<rect x="55.5" y="77.5" width="21" height="16"/><rect x="76.5" y="77.5" width="21" height="16"/><rect x="97.5" y="77.5" width="21" height="16"/>
</g>
<g stroke="#7e7e7e" fill="none" stroke-width="3.2">
<path d="M65 35.5H70V41.5H65"/><path d="M91 35.5H86Q83 35.5 83 38.5Q83 41.5 86 41.5H91"/><path d="M112 35.5H104V41.5H112"/>
<path d="M64 67V59H72M67 67V62H72" stroke-width="2.6"/><path d="M85 67V62Q85 59 88 59H93M88 67V62H93" stroke-width="2.6"/><path d="M106 67V62L109 59H114M109 67V62H114" stroke-width="2.6"/>
<path d="M63 81V91H72"/><path d="M84 81V91H93"/><path d="M105 81V91H114"/>
</g>
<g fill="#333"><circle cx="66" cy="38.5" r="1.3"/><circle cx="87" cy="38.5" r="1.3"/><circle cx="108" cy="38.5" r="1.3"/><circle cx="67" cy="62" r="1.3"/><circle cx="88" cy="62" r="1.3"/><circle cx="109" cy="62" r="1.3"/></g>
<rect x="160.5" y="53.5" width="32" height="16" fill="#7c7c7c" stroke="#464646"/>
<rect x="5" y="99" width="197" height="1" fill="#444"/>
<rect x="5.5" y="110.5" width="10" height="10" fill="#3c3c3c" stroke="#777"/><rect x="8" y="115" width="5" height="1.5" fill="#eee"/>
<rect x="131.5" y="106.5" width="34" height="17" fill="#5a5a5a" stroke="#464646"/><rect x="165.5" y="106.5" width="34" height="17" fill="#5a5a5a" stroke="#464646"/>
<rect x="138.5" y="110.5" width="20" height="9" stroke="#8a8a8a" stroke-width="1.6" stroke-dasharray="5 3" fill="none"/>
<rect x="172.5" y="110.5" width="20" height="9" stroke="#8a8a8a" stroke-width="1.6" stroke-dasharray="4 3" stroke-dashoffset="2" fill="none"/>
<g fill="#7c7c7c" stroke="#464646">
<rect x="5.5" y="131.5" width="29" height="15"/><rect x="38.5" y="131.5" width="29" height="15"/><rect x="71.5" y="131.5" width="29" height="15"/><rect x="104.5" y="131.5" width="29" height="15"/><rect x="137.5" y="131.5" width="29" height="15"/><rect x="170.5" y="131.5" width="29" height="15"/>
</g>
<rect x="5" y="165" width="197" height="1" fill="#444"/>
<rect x="54.5" y="173.5" width="47" height="15" fill="#7c7c7c" stroke="#464646"/><rect x="89.5" y="173.5" width="12" height="15" fill="#5a5a5a" stroke="#464646"/><path d="M92 179H99L95.5 183Z" fill="#888"/>
<rect x="115.5" y="173.5" width="46" height="15" fill="#7c7c7c" stroke="#464646"/><rect x="149.5" y="173.5" width="12" height="15" fill="#5a5a5a" stroke="#464646"/><path d="M152 179H159L155.5 183Z" fill="#888"/>
<path d="M184 178H196M193 176L196 178M196 184H184M187 186L184 184" stroke="#777" stroke-width="1.5" fill="none"/>
<rect x="54.5" y="199.5" width="14" height="16" fill="#5a5a5a" stroke="#464646"/><path d="M58 205L61.5 202L65 205ZM58 210L61.5 213L65 210Z" fill="#888"/>
<rect x="68.5" y="199.5" width="33" height="16" fill="#7c7c7c" stroke="#464646"/>
<rect x="115.5" y="199.5" width="13" height="16" fill="#5a5a5a" stroke="#464646"/><path d="M118.5 205L122 202L125.5 205ZM118.5 210L122 213L125.5 210Z" fill="#888"/>
<rect x="128.5" y="199.5" width="33" height="16" fill="#7c7c7c" stroke="#464646"/>
<path d="M187 203H185A4 4 0 0 0 185 211H187M191 203H193A4 4 0 0 1 193 211H191M187 207H191" stroke="#777" stroke-width="1.4" fill="none"/>
<rect x="54.5" y="225.5" width="21" height="16" fill="#5a5a5a" stroke="#464646"/><rect x="75.5" y="225.5" width="21" height="16" fill="#5a5a5a" stroke="#464646"/>
<path d="M59 231H70M67 229L70 231M59 236H70M67 234L70 236" stroke="#777" fill="none"/><path d="M80 230H91M80 235H91M83 233L80 235" stroke="#777" fill="none"/>
<rect x="5" y="248" width="197" height="1" fill="#444"/>
<rect x="54.5" y="257.5" width="84" height="16" fill="#7c7c7c" stroke="#464646"/><rect x="138.5" y="257.5" width="13" height="16" fill="#5a5a5a" stroke="#464646"/>
<path d="M174 262L180 267L174 272ZM174 262V272" stroke="#777" fill="none"/><path d="M187 262H197L192 267Z" fill="#777"/>
<rect x="0" y="279" width="206" height="9" fill="#474747"/><rect x="0" y="287" width="206" height="1.5" fill="#333"/><rect x="94" y="282" width="18" height="3" fill="url(#dots)"/>
<defs><pattern id="dots" width="2" height="3" patternUnits="userSpaceOnUse"><rect width="1" height="3" fill="#222"/></pattern></defs>
<rect x="204.5" y="78" width="2.5" height="14" fill="#9a9a9a"/>
</svg>
<div class="t" style="left:1000px;top:402px;width:10px"></div>
<div class="t" style="left:909px;top:420px;font-size:11px;color:#8c8c8c">虚线</div>
<div class="t" style="left:942px;top:420px;font-size:11px;color:#8c8c8c">间隙</div>
<div class="t" style="left:975px;top:420px;font-size:11px;color:#8c8c8c">虚线</div>
<div class="t" style="left:1008px;top:420px;font-size:11px;color:#8c8c8c">间隙</div>
<div class="t" style="left:1041px;top:420px;font-size:11px;color:#8c8c8c">虚线</div>
<div class="t" style="left:1074px;top:420px;font-size:11px;color:#8c8c8c">间隙</div>
<div class="t" style="left:927px;top:446px;color:#8c8c8c">箭头:</div>
<div class="t" style="left:927px;top:472px;color:#8c8c8c">缩放:</div>
<div class="t" style="left:970px;top:472px;font-family:'Liberation Sans',sans-serif;font-size:10px;color:#222">100%</div>
<div class="t" style="left:1031px;top:472px;font-family:'Liberation Sans',sans-serif;font-size:10px;color:#222">100%</div>
<div class="t" style="left:927px;top:498px;color:#8c8c8c">对齐:</div>
<div class="t" style="left:904px;top:530px;color:#8c8c8c">配置文件:</div>

<!-- DOCK -->
<div class="a" style="left:1094px;top:561px;width:12px;height:51px;background:#3c3c3c"></div>
<div class="a" style="left:1106px;top:62px;width:6px;height:550px;background:#2f2f2f"></div>
<div class="a" style="left:1112px;top:62px;width:34px;height:550px;background:#4a4a4a"></div>
<div class="a" style="left:1112px;top:62px;width:34px;height:10px;background:#383838"></div>
<svg style="left:1112px;top:62px" width="34" height="550">
<path d="M27 2L24 5L27 8ZM31 2L28 5L31 8Z" fill="#ccc"/>
<defs><pattern id="dd" width="2" height="3" patternUnits="userSpaceOnUse"><rect width="1" height="3" fill="#1e1e1e"/></pattern></defs><g fill="url(#dd)"><rect x="8" y="14" width="18" height="3"/><rect x="8" y="50" width="18" height="3"/><rect x="8" y="138" width="18" height="3"/><rect x="8" y="200" width="18" height="3"/><rect x="8" y="262" width="18" height="3"/></g>
<g fill="#2e2e2e"><rect x="0" y="46" width="34" height="2"/><rect x="0" y="133" width="34" height="2"/><rect x="0" y="195" width="34" height="2"/><rect x="0" y="258" width="34" height="2"/><rect x="0" y="320" width="34" height="2"/></g>
<defs><linearGradient id="dq" x1="0" y1="1" x2="1" y2="0"><stop offset="0" stop-color="#eee"/><stop offset="1" stop-color="#444"/></linearGradient></defs>
<path d="M9 24V40H25Q25 25 9 24Z" fill="url(#dq)" stroke="#ddd"/>
<rect x="9.5" y="63.5" width="15" height="10" fill="#999" stroke="#ddd"/><path d="M9.5 68.5H24.5M14.5 63.5V73.5M19.5 63.5V73.5" stroke="#444"/>
<rect x="12" y="93" width="10" height="9" fill="#ccc"/><path d="M13 93L10 85M16 93L16 84M19 93L23 86" stroke="#ddd" stroke-width="1.8"/>
<circle cx="17" cy="115" r="4" fill="#ccc"/><circle cx="12.5" cy="120" r="4" fill="#ccc"/><circle cx="21.5" cy="120" r="4" fill="#ccc"/><path d="M17 118L15 126H19Z" fill="#ccc"/>
<circle cx="17" cy="155" r="7" fill="#aaa" stroke="#ddd" stroke-dasharray="2 1.5" stroke-width="1.5"/>
<rect x="13.5" y="174.5" width="12" height="11" fill="none" stroke="#ccc" stroke-width="1.2"/><rect x="9.5" y="181.5" width="7" height="7" fill="#4a4a4a" stroke="#ccc" stroke-width="1.2"/>
<path d="M17 208L26 213L17 218L8 213Z" fill="#ddd"/><path d="M8 216L17 221L26 216L26 218L17 224L8 218Z" fill="#ddd"/>
<rect x="9.5" y="234.5" width="10" height="10" fill="none" stroke="#ccc" stroke-width="1.2"/><rect x="13.5" y="239.5" width="13" height="11" fill="#4a4a4a" stroke="#ccc" stroke-width="1.2"/>
<defs><linearGradient id="dg" x1="0" x2="1"><stop offset="0" stop-color="#222"/><stop offset="1" stop-color="#eee"/></linearGradient></defs>
<rect x="9.5" y="273.5" width="16" height="11" fill="url(#dg)" stroke="#ccc"/>
<circle cx="15" cy="301" r="5.5" fill="#bbb"/><circle cx="19" cy="305" r="6" fill="none" stroke="#ccc" stroke-width="1.5"/>
</svg>
<!-- WATERMARK -->
<svg style="left:940px;top:0" width="80" height="56" fill="none" stroke="#858585" stroke-width="2.7" stroke-linecap="round" stroke-linejoin="round">
<path d="M7 15H15Q18 15 18 18V45Q18 49 22 49"/>
<rect x="22" y="17" width="45" height="32" rx="6"/>
<path d="M35 24H60M43 10V24"/>
<path d="M25 36H29M25 40H29M62 36H66M62 40H66"/>
<path d="M38 32L50 37L38 42Z" fill="#858585"/>
</svg>
<div class="t" style="left:1013px;top:4px;font-size:42.5px;line-height:54px;font-weight:300;color:#858585">虎课网</div>
<!-- YELLOW CARD -->
<div class="a" style="left:63px;top:531px;width:133px;height:67px;background:#f3c22b;border-radius:8px"></div>
<div class="t" style="left:85px;top:542px;font-size:17.5px;line-height:20px;font-weight:500;color:#3a3526;-webkit-text-stroke:0.3px #3a3526">路径查找器</div>
<div class="t" style="left:83px;top:570.5px;font-size:17px;line-height:20px;color:#3a3526;letter-spacing:-0.6px;-webkit-text-stroke:0.15px #3a3526">Ctrl+Shift+F9</div>

<!-- SUBTITLE -->
<div class="t" style="left:286px;top:581px;font-size:23px;line-height:28px;color:#fff;-webkit-text-stroke:3.5px #141414;paint-order:stroke fill"><span style="font-size:23.5px;letter-spacing:1px">Ctrl+Shift+F9</span>打开路径查找器，然后把多余的部分删掉</div>

<!-- PLAY BUTTON -->
<svg style="left:1040px;top:505px" width="86" height="86">
<circle cx="42.5" cy="43.2" r="35.8" fill="none" stroke="#fff" stroke-width="4.3"/>
<path d="M36 29Q34 27.5 34 30.5V57Q34 60 36 58.5L56 45.5Q58 44 56 42.5Z" fill="#fff" stroke="#fff" stroke-width="2" stroke-linejoin="round"/>
</svg>

<!-- PROGRESS BAR -->
<div class="a" style="left:0;top:603px;width:1146px;height:8px;background:rgba(109,109,109,0.82)"></div>
<div class="a" style="left:272px;top:603px;width:105px;height:8px;background:#71819a"></div><div class="a" style="left:0;top:610.7px;width:1146px;height:1.3px;background:#262626"></div>
<div class="a" style="left:0;top:603px;width:272px;height:8px;background:#fdd000"></div>
<div class="a" style="left:265px;top:599px;width:14px;height:14px;border-radius:50%;background:#fff"></div>
<div class="a" style="left:17px;top:604px;width:23px;height:23px;border-radius:50%;background:#fff;border:1.5px solid #f59a9a"></div><svg style="left:20px;top:607px" width="17" height="6"><path d="M3 3L6 5M14 3L11 5" stroke="#f5a5b5" stroke-width="2"/></svg>
</body></html>
